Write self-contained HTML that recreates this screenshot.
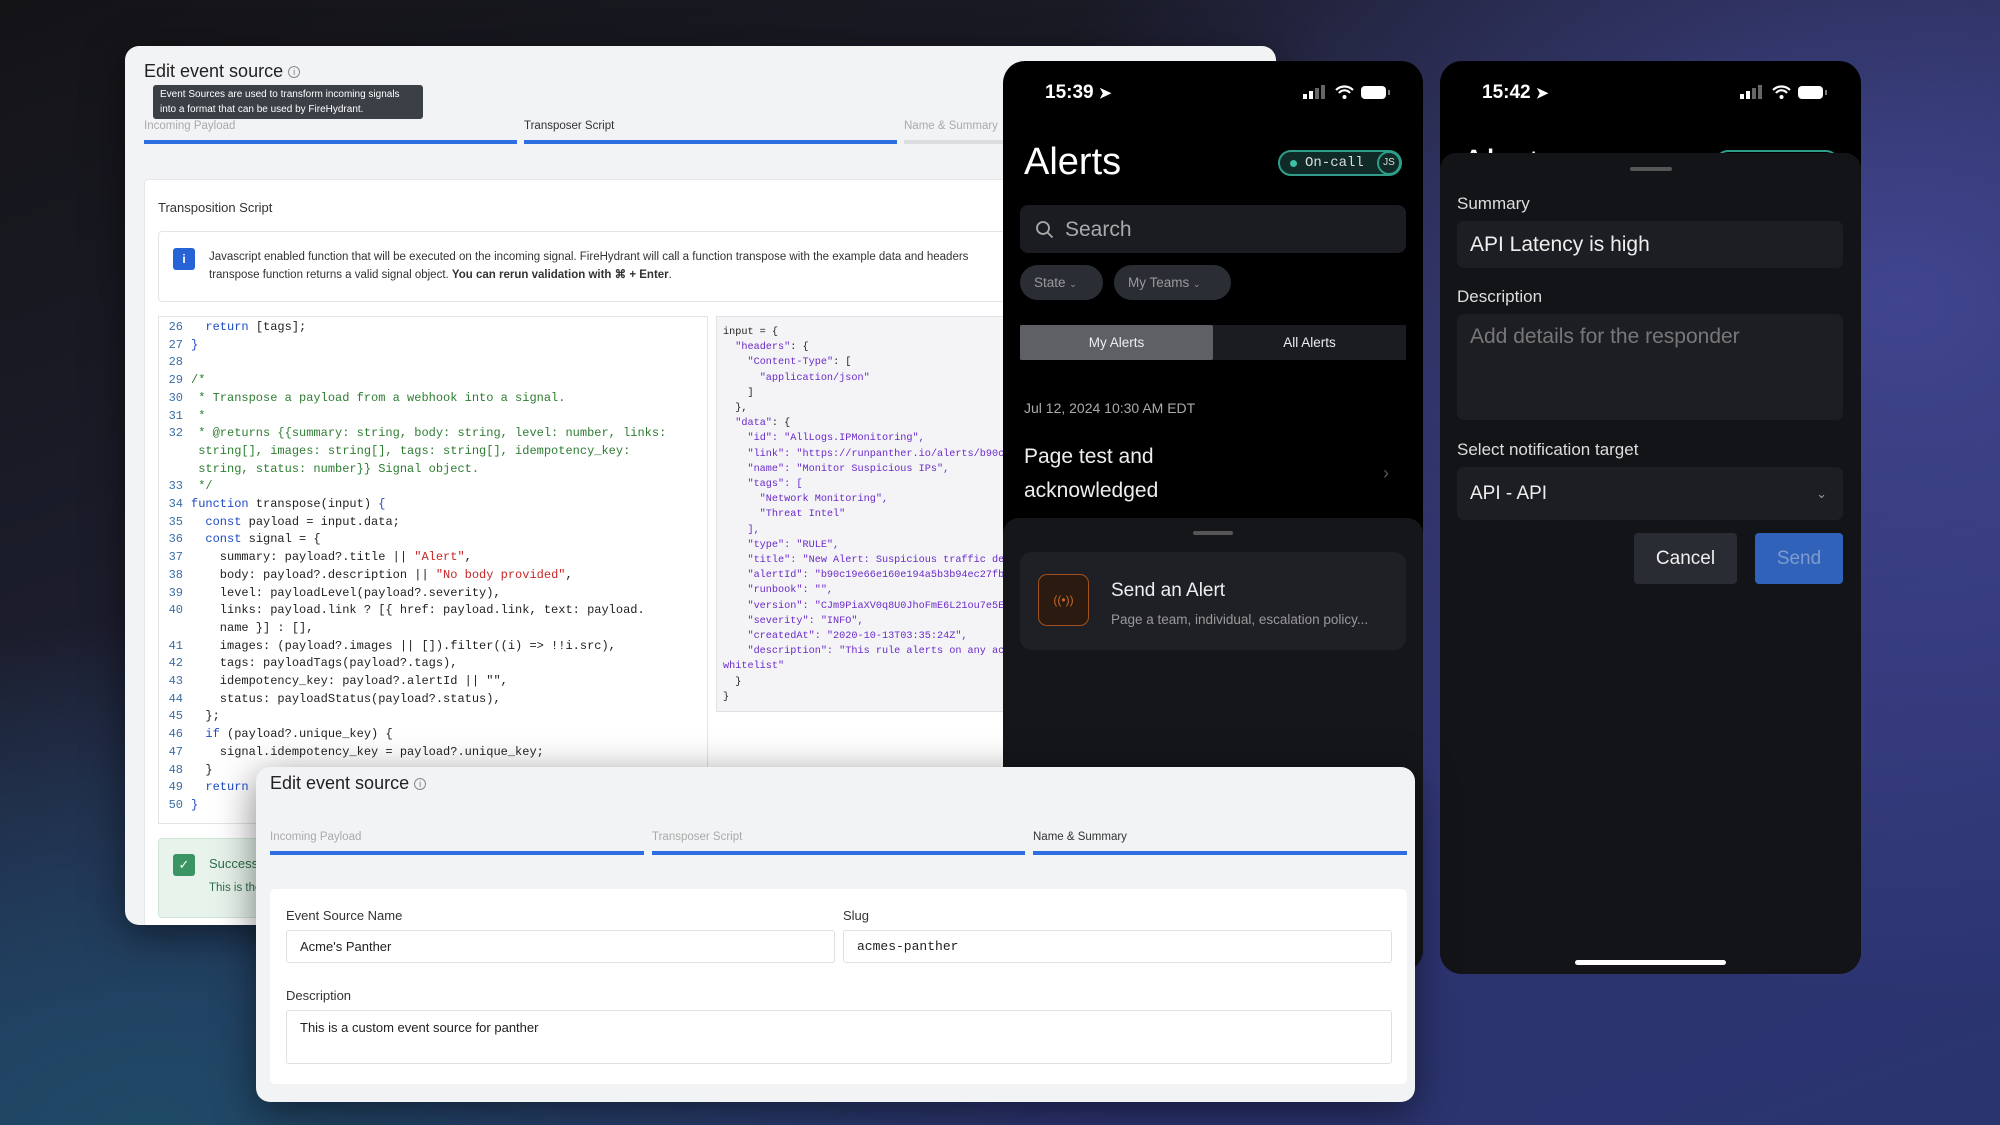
<!DOCTYPE html>
<html><head><meta charset="utf-8"><style>
*{box-sizing:border-box;margin:0;padding:0}
body{width:2000px;height:1125px;overflow:hidden;position:relative;font-family:"Liberation Sans",sans-serif;
background:radial-gradient(ellipse 900px 700px at 1900px 300px,#40458f 0%,rgba(64,69,143,0) 100%),radial-gradient(ellipse 900px 500px at 150px 1125px,#1f4a66 0%,rgba(31,74,102,0) 100%),linear-gradient(160deg,#141417 0%,#1c1d2c 35%,#2e3370 70%,#2a3570 100%);}
.abs{position:absolute}
.win{position:absolute;background:#f2f3f5;border-radius:14px;overflow:hidden;box-shadow:0 10px 40px rgba(0,0,0,.5)}
.mono{font-family:"Liberation Mono",monospace}
.code{position:absolute;left:0;top:0;font-size:12px;line-height:17.7px;color:#222;white-space:pre}
.ln{display:inline-block;width:24px;text-align:right;color:#3a6ea5;margin-right:8px}
.kw{color:#1f4bc4}.cm{color:#2e7d32}.st{color:#c62828}
.json{font-size:10.2px;line-height:15.2px;color:#6a2bc9;white-space:pre}
.phone{position:absolute;background:#000;border-radius:22px;overflow:hidden;color:#fff}
.lbl{color:#ddd;font-size:17px}
</style></head><body>

<!-- back window -->
<div class="win" style="left:125px;top:46px;width:1151px;height:879px;">
  <div class="abs" style="left:19px;top:15px;font-size:18px;color:#222">Edit event source <span style="color:#777;border:1px solid #888;border-radius:50%;display:inline-block;width:12px;height:12px;line-height:11px;text-align:center;vertical-align:2px;font-size:9px">i</span></div>
  <div class="abs" style="left:28px;top:39px;width:270px;height:34px;background:#3b3f46;border-radius:3px;color:#fff;font-size:10px;line-height:15px;padding:2px 7px">Event Sources are used to transform incoming signals<br>into a format that can be used by FireHydrant.</div>
  <div class="abs" style="left:19px;top:74px;font-size:11.5px;color:#aaa">Incoming Payload</div>
  <div class="abs" style="left:399px;top:74px;font-size:11.5px;color:#333">Transposer Script</div>
  <div class="abs" style="left:779px;top:74px;font-size:11.5px;color:#aaa">Name &amp; Summary</div>
  <div class="abs" style="left:19px;top:94px;width:373px;height:4px;background:#2f6ee0"></div>
  <div class="abs" style="left:399px;top:94px;width:373px;height:4px;background:#2f6ee0"></div>
  <div class="abs" style="left:779px;top:94px;width:373px;height:4px;background:#dcdde0"></div>
  <div class="abs" style="left:19px;top:133px;width:1140px;height:760px;background:#fff;border-radius:4px;border:1px solid #e6e7ea"></div>
  <div class="abs" style="left:33px;top:154px;font-size:13px;color:#333">Transposition Script</div>
  <div class="abs" style="left:33px;top:185px;width:1120px;height:71px;border:1px solid #e3e4e7;border-radius:4px;background:#fff"></div>
  <div class="abs" style="left:48px;top:202px;width:22px;height:22px;background:#2563d6;border-radius:3px;color:#fff;font-size:12px;text-align:center;line-height:22px;font-weight:bold">i</div>
  <div class="abs" style="left:84px;top:202px;font-size:11.5px;line-height:18px;color:#333;white-space:nowrap">Javascript enabled function that will be executed on the incoming signal. FireHydrant will call a function transpose with the example data and headers<br>transpose function returns a valid signal object. <b>You can rerun validation with ⌘ + Enter</b>.</div>
  <div class="abs" style="left:33px;top:270px;width:550px;height:508px;border:1px solid #e3e4e7;background:#fff;overflow:hidden">
    <div class="code mono" style="left:0;top:2px"><span class="ln">26</span>  <span class="kw">return</span> [tags];
<span class="ln">27</span><span class="kw">}</span>
<span class="ln">28</span>
<span class="ln">29</span><span class="cm">/*</span>
<span class="ln">30</span><span class="cm"> * Transpose a payload from a webhook into a signal.</span>
<span class="ln">31</span><span class="cm"> *</span>
<span class="ln">32</span><span class="cm"> * @returns {{summary: string, body: string, level: number, links:</span>
<span class="ln"></span><span class="cm"> string[], images: string[], tags: string[], idempotency_key:</span>
<span class="ln"></span><span class="cm"> string, status: number}} Signal object.</span>
<span class="ln">33</span><span class="cm"> */</span>
<span class="ln">34</span><span class="kw">function</span> transpose(input) <span class="kw">{</span>
<span class="ln">35</span>  <span class="kw">const</span> payload = input.data;
<span class="ln">36</span>  <span class="kw">const</span> signal = {
<span class="ln">37</span>    summary: payload?.title || <span class="st">"Alert"</span>,
<span class="ln">38</span>    body: payload?.description || <span class="st">"No body provided"</span>,
<span class="ln">39</span>    level: payloadLevel(payload?.severity),
<span class="ln">40</span>    links: payload.link ? [{ href: payload.link, text: payload.
<span class="ln"></span>    name }] : [],
<span class="ln">41</span>    images: (payload?.images || []).filter((i) => !!i.src),
<span class="ln">42</span>    tags: payloadTags(payload?.tags),
<span class="ln">43</span>    idempotency_key: payload?.alertId || "",
<span class="ln">44</span>    status: payloadStatus(payload?.status),
<span class="ln">45</span>  };
<span class="ln">46</span>  <span class="kw">if</span> (payload?.unique_key) {
<span class="ln">47</span>    signal.idempotency_key = payload?.unique_key;
<span class="ln">48</span>  }
<span class="ln">49</span>  <span class="kw">return</span> signal;
<span class="ln">50</span><span class="kw">}</span></div>
  </div>
  <div class="abs" style="left:591px;top:270px;width:520px;height:396px;border:1px solid #e0e1e4;background:#f4f4f6;overflow:hidden">
    <div class="json mono" style="position:absolute;left:6px;top:8px;color:#222">input = {
  <span style="color:#6a2bc9">"headers"</span>: {
    <span style="color:#6a2bc9">"Content-Type"</span>: [
      <span style="color:#6a2bc9">"application/json"</span>
    ]
  },
  <span style="color:#6a2bc9">"data"</span>: {
    <span style="color:#6a2bc9">"id": "AllLogs.IPMonitoring",
    "link": "https://runpanther.io/alerts/b90c19e66e160e194a5b3b94ec27fb
    "name": "Monitor Suspicious IPs",
    "tags": [
      "Network Monitoring",
      "Threat Intel"
    ],
    "type": "RULE",
    "title": "New Alert: Suspicious traffic detected
    "alertId": "b90c19e66e160e194a5b3b94ec27fb8c
    "runbook": "",
    "version": "CJm9PiaXV0q8U0JhoFmE6L21ou7e5E
    "severity": "INFO",
    "createdAt": "2020-10-13T03:35:24Z",
    "description": "This rule alerts on any activity
whitelist"</span>
  }
}</div>
  </div>
  <div class="abs" style="left:33px;top:792px;width:400px;height:80px;background:#e8f3ec;border:1px solid #cfe5d7;border-radius:4px"></div>
  <div class="abs" style="left:48px;top:808px;width:22px;height:22px;background:#3a9463;border-radius:3px;color:#fff;font-size:13px;text-align:center;line-height:22px">✓</div>
  <div class="abs" style="left:84px;top:810px;font-size:13px;color:#2c6e49">Success</div>
  <div class="abs" style="left:84px;top:836px;font-size:11.5px;color:#2c6e49">This is the result</div>
</div>

<!-- phone 1 -->
<div class="phone" style="left:1003px;top:61px;width:420px;height:911px;">
  <div class="abs" style="left:42px;top:21px;font-size:19px;font-weight:bold">15:39 <span style="font-size:15px">➤</span></div>
  <svg class="abs" style="left:300px;top:24px" width="90" height="16"><rect x="0" y="9" width="4" height="5" fill="#fff"/><rect x="6" y="6" width="4" height="8" fill="#fff"/><rect x="12" y="3" width="4" height="11" fill="#666"/><rect x="18" y="0" width="4" height="14" fill="#666"/><path d="M33 5a12 12 0 0 1 17 0M36 8a7 7 0 0 1 11 0" stroke="#fff" stroke-width="2.2" fill="none"/><circle cx="41.5" cy="12" r="2" fill="#fff"/><rect x="58" y="1" width="25" height="13" rx="4" fill="#fff"/><rect x="85" y="5" width="2" height="5" fill="#777"/></svg>
  <div class="abs" style="left:21px;top:80px;font-size:38px">Alerts</div>
  <div class="abs" style="left:275px;top:89px;width:124px;height:26px;border:2px solid #2f9d8a;border-radius:14px;background:#0f2a27"></div>
  <div class="abs" style="left:287px;top:99px;width:7px;height:7px;border-radius:50%;background:#3cc0a8"></div>
  <div class="abs mono" style="left:302px;top:94px;font-size:14px;color:#ddd">On-call</div>
  <div class="abs" style="left:374px;top:90px;width:24px;height:24px;border:2px solid #2f9d8a;border-radius:50%;font-size:10px;text-align:center;line-height:20px;color:#ddd">JS</div>
  <div class="abs" style="left:17px;top:144px;width:386px;height:48px;background:#1b1c21;border-radius:8px"></div>
  <svg class="abs" style="left:32px;top:159px" width="20" height="20"><circle cx="8" cy="8" r="6" stroke="#aaa" stroke-width="1.8" fill="none"/><path d="M12.5 12.5l5 5" stroke="#aaa" stroke-width="1.8"/></svg>
  <div class="abs" style="left:62px;top:157px;font-size:21px;color:#aaa">Search</div>
  <div class="abs" style="left:17px;top:204px;width:83px;height:35px;background:#2b2d35;border-radius:18px;color:#999;font-size:13.5px;line-height:35px;padding-left:14px">State <span style="font-size:9px">⌄</span></div>
  <div class="abs" style="left:111px;top:204px;width:117px;height:35px;background:#2b2d35;border-radius:18px;color:#999;font-size:13.5px;line-height:35px;padding-left:14px">My Teams <span style="font-size:9px">⌄</span></div>
  <div class="abs" style="left:17px;top:264px;width:386px;height:35px;background:#1b1c21"></div>
  <div class="abs" style="left:17px;top:264px;width:193px;height:35px;background:#5f6066;border-radius:2px;color:#eee;font-size:13.5px;text-align:center;line-height:35px">My Alerts</div>
  <div class="abs" style="left:210px;top:264px;width:193px;height:35px;color:#eee;font-size:13.5px;text-align:center;line-height:35px">All Alerts</div>
  <div class="abs" style="left:21px;top:339px;font-size:14px;color:#aaa">Jul 12, 2024 10:30 AM EDT</div>
  <div class="abs" style="left:21px;top:379px;font-size:21px;line-height:34px;color:#eee">Page test and<br>acknowledged</div>
  <div class="abs" style="left:380px;top:402px;font-size:18px;color:#555">›</div>
  <div class="abs" style="left:0;top:457px;width:420px;height:460px;background:#15161a;border-radius:16px 16px 0 0"></div>
  <div class="abs" style="left:190px;top:470px;width:40px;height:4px;border-radius:2px;background:#555"></div>
  <div class="abs" style="left:17px;top:491px;width:386px;height:98px;background:#1f2026;border-radius:12px"></div>
  <div class="abs" style="left:35px;top:513px;width:51px;height:52px;border:1.5px solid #a0521f;border-radius:9px;background:#2a1a10;color:#c66a2a;font-size:12px;text-align:center;line-height:50px">((•))</div>
  <div class="abs" style="left:108px;top:519px;font-size:19px;color:#eee">Send an Alert</div>
  <div class="abs" style="left:108px;top:551px;font-size:13.5px;color:#999">Page a team, individual, escalation policy...</div>
</div>

<!-- phone 2 -->
<div class="phone" style="left:1440px;top:61px;width:421px;height:913px;">
  <div class="abs" style="left:42px;top:21px;font-size:19px;font-weight:bold">15:42 <span style="font-size:15px">➤</span></div>
  <svg class="abs" style="left:300px;top:24px" width="90" height="16"><rect x="0" y="9" width="4" height="5" fill="#fff"/><rect x="6" y="6" width="4" height="8" fill="#fff"/><rect x="12" y="3" width="4" height="11" fill="#666"/><rect x="18" y="0" width="4" height="14" fill="#666"/><path d="M33 5a12 12 0 0 1 17 0M36 8a7 7 0 0 1 11 0" stroke="#fff" stroke-width="2.2" fill="none"/><circle cx="41.5" cy="12" r="2" fill="#fff"/><rect x="58" y="1" width="25" height="13" rx="4" fill="#fff"/><rect x="85" y="5" width="2" height="5" fill="#777"/></svg>
  <div class="abs" style="left:21px;top:82px;font-size:38px">Alerts</div>
  <div class="abs" style="left:275px;top:89px;width:124px;height:26px;border:2px solid #2f9d8a;border-radius:14px"></div>
  <div class="abs" style="left:0;top:92px;width:421px;height:830px;background:#131418;border-radius:16px 16px 0 0"></div>
  <div class="abs" style="left:190px;top:106px;width:42px;height:4px;border-radius:2px;background:#555"></div>
  <div class="abs lbl" style="left:17px;top:133px">Summary</div>
  <div class="abs" style="left:17px;top:160px;width:386px;height:47px;background:#1d1e23;border-radius:7px;color:#eee;font-size:21px;line-height:47px;padding-left:13px">API Latency is high</div>
  <div class="abs lbl" style="left:17px;top:226px">Description</div>
  <div class="abs" style="left:17px;top:253px;width:386px;height:106px;background:#1d1e23;border-radius:7px;color:#777;font-size:21px;padding:11px 13px">Add details for the responder</div>
  <div class="abs lbl" style="left:17px;top:379px">Select notification target</div>
  <div class="abs" style="left:17px;top:406px;width:386px;height:53px;background:#1d1e23;border-radius:7px;color:#eee;font-size:19px;line-height:53px;padding-left:13px">API - API<span style="position:absolute;right:16px;font-size:13px;color:#999">⌄</span></div>
  <div class="abs" style="left:194px;top:472px;width:103px;height:51px;background:#2a2c33;border-radius:4px;color:#eee;font-size:19px;text-align:center;line-height:51px">Cancel</div>
  <div class="abs" style="left:315px;top:472px;width:88px;height:51px;background:#2f62b8;border-radius:4px;color:#7e9ccf;font-size:19px;text-align:center;line-height:51px">Send</div>
  <div class="abs" style="left:135px;top:899px;width:151px;height:5px;border-radius:3px;background:#fff"></div>
</div>

<!-- front window -->
<div class="win" style="left:256px;top:767px;width:1159px;height:335px;">
  <div class="abs" style="left:14px;top:6px;font-size:18px;color:#222">Edit event source <span style="color:#777;border:1px solid #888;border-radius:50%;display:inline-block;width:12px;height:12px;line-height:11px;text-align:center;vertical-align:2px;font-size:9px">i</span></div>
  <div class="abs" style="left:14px;top:64px;font-size:11.5px;color:#aaa">Incoming Payload</div>
  <div class="abs" style="left:396px;top:64px;font-size:11.5px;color:#aaa">Transposer Script</div>
  <div class="abs" style="left:777px;top:64px;font-size:11.5px;color:#333">Name &amp; Summary</div>
  <div class="abs" style="left:14px;top:84px;width:374px;height:4px;background:#2f6ee0"></div>
  <div class="abs" style="left:396px;top:84px;width:373px;height:4px;background:#2f6ee0"></div>
  <div class="abs" style="left:777px;top:84px;width:374px;height:4px;background:#2f6ee0"></div>
  <div class="abs" style="left:14px;top:122px;width:1137px;height:195px;background:#fff;border-radius:5px"></div>
  <div class="abs" style="left:30px;top:141px;font-size:13px;color:#333">Event Source Name</div>
  <div class="abs" style="left:587px;top:141px;font-size:13px;color:#333">Slug</div>
  <div class="abs" style="left:30px;top:163px;width:549px;height:33px;border:1px solid #dfe0e3;border-radius:3px;font-size:13px;line-height:31px;padding-left:13px;color:#222">Acme's Panther</div>
  <div class="abs mono" style="left:587px;top:163px;width:549px;height:33px;border:1px solid #dfe0e3;border-radius:3px;font-size:13px;line-height:31px;padding-left:13px;color:#222">acmes-panther</div>
  <div class="abs" style="left:30px;top:221px;font-size:13px;color:#333">Description</div>
  <div class="abs" style="left:30px;top:243px;width:1106px;height:54px;border:1px solid #dfe0e3;border-radius:3px;font-size:13px;padding:9px 13px;color:#222">This is a custom event source for panther</div>
</div>
</body></html>
